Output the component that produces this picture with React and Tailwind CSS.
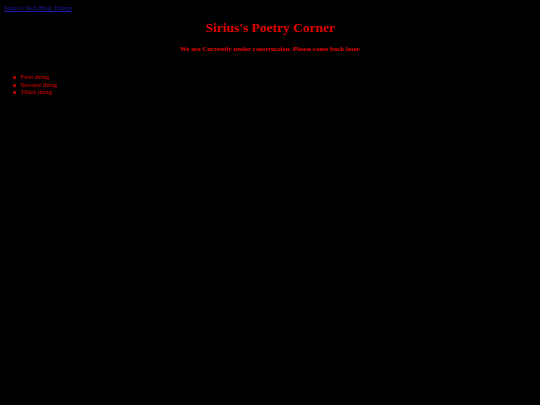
const items = ['First thing', 'Second thing', 'Third thing']

export default function App() {
  return (
    <div className="min-h-[405px] bg-black font-['Liberation_Serif',serif] text-[#dd0000]">
      <div className="px-[4px] pt-[3px] text-[6.6px] leading-[9px]">
        <a href="#" className="text-[#1a1a9c] underline">Sirius's Tech Blog Thingy</a>
      </div>
      <h1 className="mt-[7px] text-center text-[13.5px] font-bold leading-[18px]">Sirius's Poetry Corner</h1>
      <p className="mt-[7px] text-center text-[6.9px] font-bold leading-[9px]">
        We are Currently under construction. Please come back later.
      </p>
      <ul className="mt-[21px] text-[7px] leading-[7.5px]">
        {items.map((t) => (
          <li key={t} className="flex items-center">
            <span className="ml-[13px] mr-[4px] h-[3px] w-[3px] shrink-0 rounded-full bg-[#dd0000]" />
            {t}
          </li>
        ))}
      </ul>
    </div>
  )
}
